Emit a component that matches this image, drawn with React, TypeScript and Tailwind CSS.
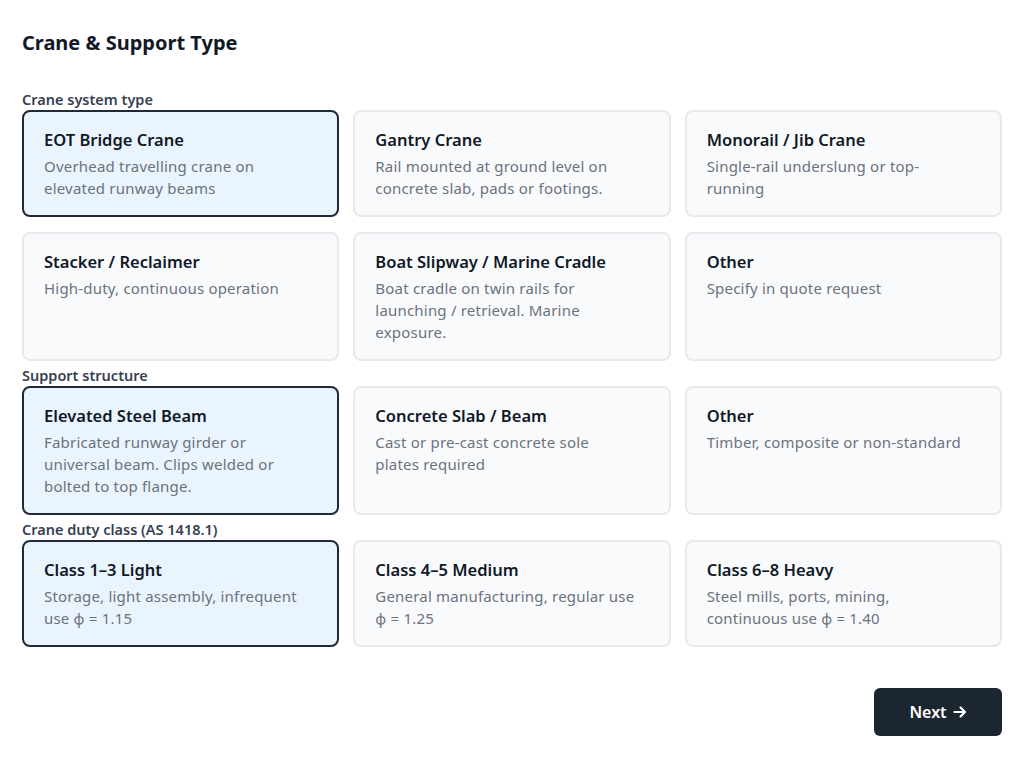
const sections = [
  {
    label: 'Crane system type',
    selected: 0,
    options: [
      { title: 'EOT Bridge Crane', desc: 'Overhead travelling crane on elevated runway beams' },
      { title: 'Gantry Crane', desc: 'Rail mounted at ground level on concrete slab, pads or footings.' },
      { title: 'Monorail / Jib Crane', desc: 'Single-rail underslung or top-running' },
      { title: 'Stacker / Reclaimer', desc: 'High-duty, continuous operation' },
      { title: 'Boat Slipway / Marine Cradle', desc: 'Boat cradle on twin rails for launching / retrieval. Marine exposure.' },
      { title: 'Other', desc: 'Specify in quote request' },
    ],
  },
  {
    label: 'Support structure',
    selected: 0,
    options: [
      { title: 'Elevated Steel Beam', desc: 'Fabricated runway girder or universal beam. Clips welded or bolted to top flange.' },
      { title: 'Concrete Slab / Beam', desc: 'Cast or pre-cast concrete sole plates required' },
      { title: 'Other', desc: 'Timber, composite or non-standard' },
    ],
  },
  {
    label: 'Crane duty class (AS 1418.1)',
    selected: 0,
    options: [
      { title: 'Class 1–3 Light', desc: 'Storage, light assembly, infrequent use ϕ = 1.15' },
      { title: 'Class 4–5 Medium', desc: 'General manufacturing, regular use ϕ = 1.25' },
      { title: 'Class 6–8 Heavy', desc: 'Steel mills, ports, mining, continuous use ϕ = 1.40' },
    ],
  },
]

export default function App() {
  return (
    <div className="min-h-screen bg-white px-[22px] pt-[29px] [font-family:Inter,'Liberation_Sans',sans-serif] text-[#1f2937]">
      <h1 className="text-[20px] font-bold leading-[28px] text-[#111827]">Crane &amp; Support Type</h1>
      <div className="mt-[32px] flex flex-col gap-[4px]">
        {sections.map(s => (
          <div key={s.label}>
            <div className="text-[14.5px] font-semibold leading-[20px] text-[#374151]">{s.label}</div>
            <div className="mt-px grid grid-cols-3 gap-x-[14px] gap-y-[15px]">
              {s.options.map((o, i) => (
                <div
                  key={o.title}
                  className={
                    i === s.selected
                      ? 'rounded-lg border-2 border-[#1f2937] bg-[#eaf4fc] py-4 pl-5 pr-8'
                      : 'rounded-lg border-2 border-[#e8e9ec] bg-[#f9fafb] py-4 pl-5 pr-8'
                  }
                >
                  <div className="text-[16.5px] font-semibold leading-[24px] text-[#111827]">{o.title}</div>
                  <div className="mt-[3px] text-[15px] leading-[22px] tracking-[0.2px] text-[#6b7280]">{o.desc}</div>
                </div>
              ))}
            </div>
          </div>
        ))}
      </div>
      <div className="mt-[41px] flex justify-end">
        <button className="flex h-[48px] w-[128px] items-center justify-center gap-1.5 rounded-md bg-[#1c2631] text-[16px] font-semibold text-white">
          Next
          <svg width="14" height="14" viewBox="0 0 14 14" fill="none" stroke="currentColor" strokeWidth="2.2" strokeLinecap="round" strokeLinejoin="round">
            <path d="M1.5 7h10M7.5 2.5 12 7l-4.5 4.5" />
          </svg>
        </button>
      </div>
    </div>
  )
}
